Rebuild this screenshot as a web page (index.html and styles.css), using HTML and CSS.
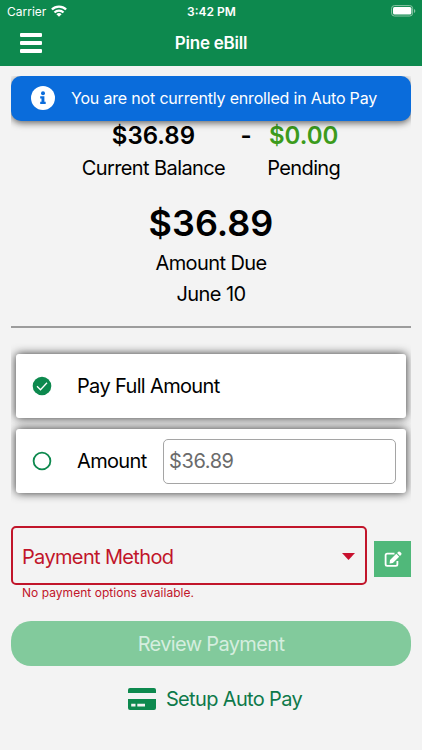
FILE: index.html
```html
<!DOCTYPE html>
<html lang="en">
<head>
    <meta charset="UTF-8">
    <meta name="viewport" content="width=device-width, initial-scale=1.0">
    <title>Pine eBill</title>
    <link rel="stylesheet" href="styles.css">
</head>
<body>
    <header class="app-header">
        <div class="status-bar">
            <div class="carrier">
                <span>Carrier</span>
                <svg class="wifi" viewBox="0 0 16 12" fill="none" stroke="#fff" stroke-width="2.3">
                    <path d="M.9 4.5a10 10 0 0 1 14.2 0"/>
                    <path d="M3.5 7.5a6.4 6.4 0 0 1 9 0"/>
                    <path d="M8 11.8L5.4 9.2a3.7 3.7 0 0 1 5.2 0z" fill="#fff" stroke="none"/>
                </svg>
            </div>
            <div class="clock">3:42 PM</div>
            <div class="battery">
                <svg viewBox="0 0 25 12">
                    <rect x=".6" y=".6" width="21" height="10.4" rx="2.8" fill="none" stroke="#8bc5a5"/>
                    <rect x="2" y="2" width="18.4" height="7.6" rx="1.5" fill="#fff"/>
                    <path d="M23 4v4q1.3-.7 1.3-2T23 4z" fill="#8bc5a5"/>
                </svg>
            </div>
        </div>
        <nav class="nav-bar">
            <button class="menu-button" aria-label="Menu">
                <span></span>
                <span></span>
                <span></span>
            </button>
            <h1>Pine eBill</h1>
        </nav>
    </header>

    <main class="content">
        <div class="banner">
            <svg class="info-icon" viewBox="0 0 24 24">
                <circle cx="12" cy="12" r="12" fill="#fff"/>
                <circle cx="12" cy="7.3" r="2" fill="#0a6cdb"/>
                <path d="M9.2 10.3h4.2v5.4h1.3v2.2H9.2v-2.2h1.3v-3.2H9.2z" fill="#0a6cdb"/>
            </svg>
            <span>You are not currently enrolled in Auto Pay</span>
        </div>

        <section class="balances">
            <div class="balance">
                <div class="amount">$36.89</div>
                <div class="label">Current Balance</div>
            </div>
            <div class="amount minus">-</div>
            <div class="balance pending">
                <div class="amount">$0.00</div>
                <div class="label">Pending</div>
            </div>
        </section>

        <section class="due">
            <div class="due-amount">$36.89</div>
            <div class="due-label">Amount Due</div>
            <div class="due-date">June 10</div>
        </section>

        <hr>

        <form class="pay-options">
            <label class="option">
                <svg class="radio" viewBox="0 0 20 20">
                    <circle cx="10" cy="10" r="9.3" fill="#0d894e"/>
                    <path d="M5 10.2l3.5 3.5 6.5-7" fill="none" stroke="#fff" stroke-width="1.3"/>
                </svg>
                <span class="option-full">Pay Full Amount</span>
            </label>
            <label class="option">
                <svg class="radio" viewBox="0 0 20 20">
                    <circle cx="10" cy="10" r="8.4" fill="none" stroke="#0d894e" stroke-width="1.8"/>
                </svg>
                <span class="option-amount">Amount</span>
                <span class="amount-field">$36.89</span>
            </label>
        </form>

        <div class="method-row">
            <div class="method-select">
                <span>Payment Method</span>
                <svg class="caret" viewBox="0 0 13 7"><path d="M0 0h13L6.5 7z" fill="#c8102e"/></svg>
            </div>
            <button class="edit-button" aria-label="Edit payment methods">
                <svg viewBox="0 0 18 18">
                    <path d="M10.5 3.7H3.2Q1.6 3.7 1.6 5.3v9q0 1.6 1.6 1.6h8.6q1.6 0 1.6-1.6v-3.2" fill="none" stroke="#fff" stroke-width="1.8"/>
                    <path d="M6 10.1L12.3 3.8l2.9 2.9L8.9 13l-3.3.4zM13.1 3l1.2-1.2q.8-.8 1.6 0l1.3 1.3q.8.8 0 1.6L16 5.9z" fill="#fff"/>
                </svg>
            </button>
        </div>
        <div class="helper">No payment options available.</div>

        <button class="review-button">Review Payment</button>

        <a class="setup-link">
            <svg class="card-icon" viewBox="0 0 28 22">
                <path d="M2 0h24a2 2 0 0 1 2 2v3H0V2a2 2 0 0 1 2-2z" fill="#0d894e"/>
                <path fill-rule="evenodd" d="M0 11h28v9a2 2 0 0 1-2 2H2a2 2 0 0 1-2-2zM3.2 15.8v2.7h4.3v-2.7zM9.3 15.8v2.7H17v-2.7z" fill="#0d894e"/>
            </svg>
            <span>Setup Auto Pay</span>
        </a>
    </main>
</body>
</html>
```

FILE: styles.css
```css
* {
    margin: 0;
    padding: 0;
    box-sizing: border-box;
}

body {
    background: #f3f3f3;
    color: #000;
    font-family: Inter, "Liberation Sans", sans-serif;
    overflow: hidden;
}

button {
    border: none;
    font-family: inherit;
}

svg {
    display: block;
}

.app-header {
    height: 66px;
    background: #0d894e;
    color: #fff;
}

.status-bar {
    display: grid;
    grid-template-columns: 1fr auto 1fr;
    align-items: center;
    height: 22px;
    padding: 0 6px 0 7px;
    font-size: 12px;
}

.carrier {
    display: flex;
    align-items: center;
    gap: 5px;
}

.wifi {
    width: 16px;
    height: 12px;
}

.clock {
    font-weight: 600;
}

.battery {
    justify-self: end;
    width: 25px;
}

.nav-bar {
    display: grid;
    grid-template-columns: 1fr auto 1fr;
    align-items: center;
    height: 42px;
    padding: 0 20px;
}

.nav-bar h1 {
    font-size: 17px;
    font-weight: 600;
    letter-spacing: -0.25px;
}

.menu-button {
    display: flex;
    flex-direction: column;
    gap: 4px;
    width: 22px;
    background: none;
}

.menu-button span {
    height: 4px;
    border-radius: 1px;
    background: #fff;
}

.content {
    margin: 10px 11px 0;
    overflow: hidden;
}

.banner {
    position: relative;
    display: flex;
    align-items: center;
    gap: 16px;
    height: 45px;
    padding: 0 0 1px 20px;
    border-radius: 10px;
    background: #0a6cdb;
    color: #fff;
    font-size: 16px;
    letter-spacing: -0.18px;
    box-shadow: 0 2px 7px rgba(0, 0, 0, 0.6);
}

.info-icon {
    width: 24px;
    height: 24px;
}

.balances {
    display: flex;
    justify-content: center;
    margin-top: -1px;
    text-align: center;
}

.amount {
    font-size: 24px;
    font-weight: 600;
    line-height: 32px;
}

.minus {
    width: 42px;
}

.pending .amount {
    color: #3c9b1c;
}

.label,
.due-label,
.due-date {
    font-size: 20px;
    line-height: 33px;
    letter-spacing: -0.6px;
}

.due {
    padding-top: 13px;
    text-align: center;
}

.due-amount {
    font-size: 36px;
    font-weight: 600;
    line-height: 50px;
}

.due-label,
.due-date {
    line-height: 31px;
}

hr {
    height: 2px;
    margin-top: 16px;
    border: none;
    background: #9c9c9c;
}

.pay-options {
    display: flex;
    flex-direction: column;
    gap: 11px;
    padding: 26px 5px 0;
}

.option {
    display: flex;
    align-items: center;
    height: 64px;
    padding: 0 10px 0 16px;
    border-radius: 3px;
    background: #fff;
    font-size: 20px;
    letter-spacing: -0.65px;
    box-shadow: 0 0 10px rgba(0, 0, 0, 0.8);
}

.radio {
    width: 20px;
    height: 20px;
    margin-right: 25px;
}

.option-amount {
    width: 86px;
}

.amount-field {
    flex: 1;
    height: 45px;
    padding-left: 5px;
    border: 1px solid #a5a5a5;
    border-radius: 5px;
    color: #6b6b6b;
    letter-spacing: -0.4px;
    line-height: 43px;
}

.method-row {
    display: flex;
    align-items: center;
    gap: 7px;
    margin-top: 33px;
}

.method-select {
    display: flex;
    align-items: center;
    justify-content: space-between;
    width: 356px;
    height: 59px;
    padding: 2px 10px 0 9px;
    border: 2px solid #c1152a;
    border-radius: 5px;
    color: #c1152a;
    font-size: 20px;
    letter-spacing: -0.65px;
}

.caret {
    width: 13px;
    height: 7px;
}

.edit-button {
    display: flex;
    align-items: center;
    justify-content: center;
    width: 37px;
    height: 36px;
    margin-top: 6px;
    background: #50b87a;
}

.edit-button svg {
    width: 18px;
    height: 18px;
}

.helper {
    padding-left: 11px;
    color: #c1152a;
    font-size: 12px;
    line-height: 16px;
    letter-spacing: 0.04px;
}

.review-button {
    width: 100%;
    height: 45px;
    margin-top: 20px;
    border-radius: 20px;
    background: #82ca9c;
    color: #d5eedf;
    font-size: 20px;
    letter-spacing: -0.65px;
}

.setup-link {
    display: flex;
    align-items: center;
    justify-content: center;
    gap: 10px;
    height: 66px;
    padding-left: 8px;
    color: #0d794a;
    font-size: 20px;
    letter-spacing: -0.65px;
}

.card-icon {
    width: 28px;
    height: 22px;
}
```
